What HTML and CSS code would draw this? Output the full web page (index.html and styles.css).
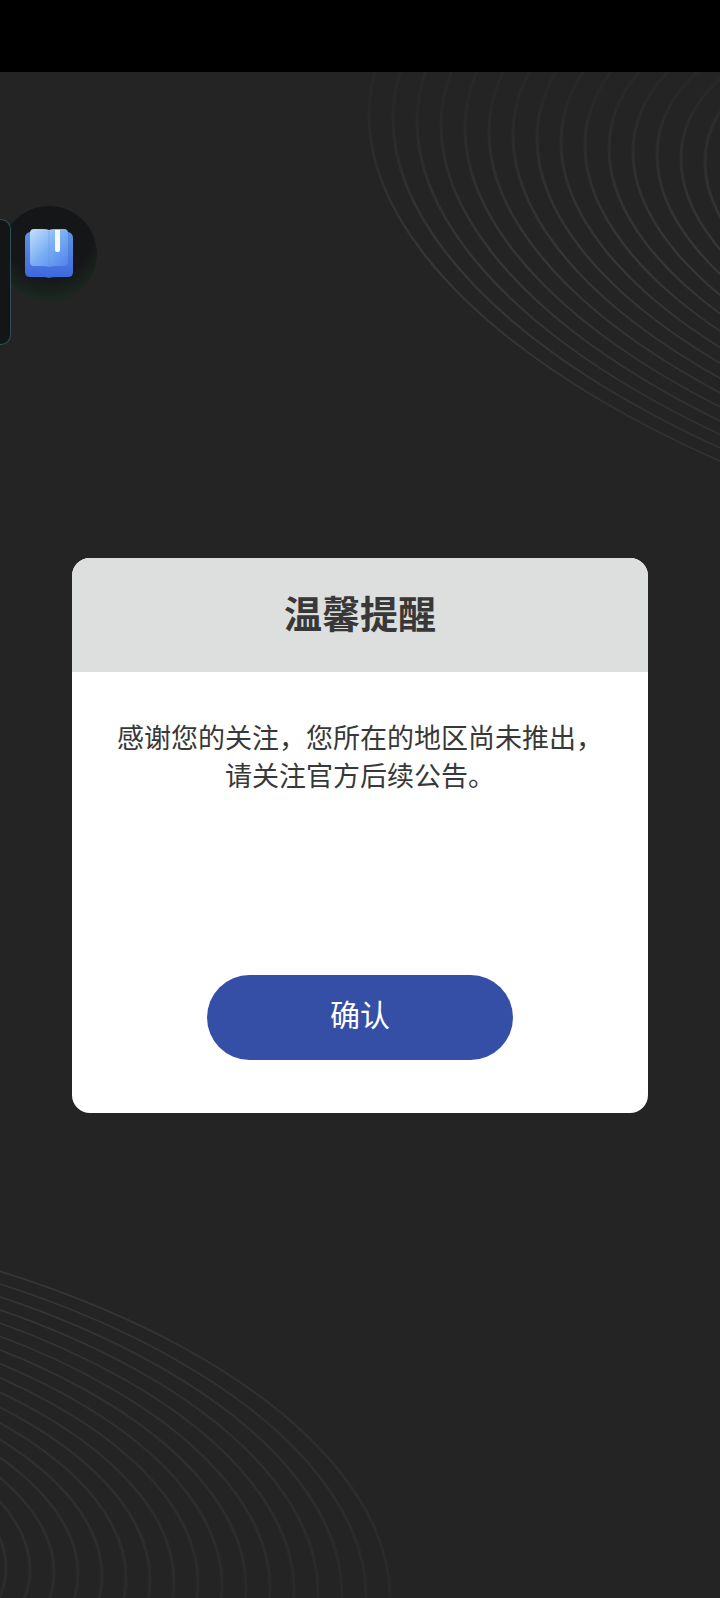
FILE: index.html
```
<!DOCTYPE html>
<html lang="zh-CN">
<head>
    <meta charset="UTF-8">
    <title>温馨提醒</title>
    <meta name="viewport" content="width=device-width, initial-scale=1">

    <link rel="stylesheet" href="styles.css">
</head>

<body>
    <header class="status-bar"></header>

    <main class="page">
        <svg class="rings rings-top" width="360" height="400" viewBox="360 72 360 400" aria-hidden="true">
            <defs>
                <linearGradient id="fadeTop" gradientUnits="userSpaceOnUse" x1="-790" y1="0" x2="-500" y2="600">
                    <stop offset="0" stop-color="#282828"/>
                    <stop offset="0.5" stop-color="#373737"/>
                    <stop offset="1" stop-color="#323232"/>
                </linearGradient>
            </defs>
            <g transform="matrix(1 0.139 0 0.455 1151 224)" fill="none" stroke="url(#fadeTop)" stroke-width="3">
                <circle r="446"/>
                <circle r="470"/>
                <circle r="494"/>
                <circle r="518"/>
                <circle r="542"/>
                <circle r="566"/>
                <circle r="590"/>
                <circle r="614"/>
                <circle r="638"/>
                <circle r="662"/>
                <circle r="686"/>
                <circle r="710"/>
                <circle r="734"/>
                <circle r="758"/>
                <circle r="782"/>
            </g>
        </svg>

        <svg class="rings rings-bottom" width="400" height="338" viewBox="0 1260 400 338" aria-hidden="true">
            <defs>
                <linearGradient id="fadeBottom" gradientUnits="userSpaceOnUse" x1="300" y1="-500" x2="660" y2="100">
                    <stop offset="0" stop-color="#353535"/>
                    <stop offset="1" stop-color="#272727"/>
                </linearGradient>
            </defs>
            <g transform="matrix(1 0.08 0 0.474 -305 1543)" fill="none" stroke="url(#fadeBottom)" stroke-width="3">
                <circle r="311"/>
                <circle r="335"/>
                <circle r="359"/>
                <circle r="383"/>
                <circle r="407"/>
                <circle r="431"/>
                <circle r="455"/>
                <circle r="479"/>
                <circle r="503"/>
                <circle r="527"/>
                <circle r="551"/>
                <circle r="575"/>
                <circle r="599"/>
                <circle r="623"/>
                <circle r="647"/>
                <circle r="671"/>
                <circle r="695"/>
            </g>
        </svg>

        <div class="float-ball">
            <svg width="52" height="52" viewBox="0 0 52 52" aria-hidden="true">
                <defs>
                    <linearGradient id="cover" x1="0" y1="0" x2="0" y2="1">
                        <stop offset="0" stop-color="#5e93e4"/>
                        <stop offset="1" stop-color="#3e68dc"/>
                    </linearGradient>
                    <linearGradient id="pages" x1="0" y1="0" x2="1" y2="1">
                        <stop offset="0" stop-color="#c6e1fc"/>
                        <stop offset="0.5" stop-color="#79aef4"/>
                        <stop offset="1" stop-color="#4f82ea"/>
                    </linearGradient>
                </defs>
                <path d="M7 4H45Q50 5 50 10V44Q50 49 45 49H33Q29 49 26 50Q23 49 19 49H7Q2 49 2 44V10Q2 5 7 4Z" fill="url(#cover)"/>
                <path d="M11 1H20Q24 1 26 2Q28 1 32 1H41Q45 1 45 5V34Q45 38 41 38H32Q28 38 26 39Q24 38 20 38H11Q7 38 7 34V5Q7 1 11 1Z" fill="url(#pages)"/>
                <path d="M26 3V38" stroke="#5c91e6" stroke-width="1" opacity="0.4"/>
                <path d="M32 2H37V22Q37 24 35 24H34Q32 24 32 22Z" fill="#f4f8ff"/>
            </svg>
        </div>
        <div class="side-handle"></div>

        <section class="dialog" role="dialog" aria-labelledby="dialog-title">
            <h1 class="dialog-title" id="dialog-title">温馨提醒</h1>
            <div class="dialog-body">
                <p class="message">感谢您的关注，您所在的地区尚未推出，请关注官方后续公告。</p>
                <button type="button" class="confirm-btn">确认</button>
            </div>
        </section>
    </main>
</body>
</html>
```
FILE: styles.css
```
* {
    box-sizing: border-box;
}

body {
    display: flex;
    flex-direction: column;
    min-height: 100vh;
    margin: 0;
    background-color: #242424;
    color: #383838;
    font-family: "Noto Sans CJK SC", sans-serif;
}

.status-bar {
    height: 72px;
    background-color: #000;
}

.page {
    position: relative;
    display: flex;
    flex: 1;
    align-items: center;
    justify-content: center;
    overflow: hidden;
}

/* background rings */
.rings {
    position: absolute;
}

.rings-top {
    top: 0;
    right: 0;
}

.rings-bottom {
    bottom: 0;
    left: 0;
}

/* floating shortcut at the left edge */
.float-ball {
    position: absolute;
    top: 134px;
    left: 1px;
    display: flex;
    align-items: center;
    justify-content: center;
    width: 96px;
    height: 96px;
    border-radius: 50%;
    background: radial-gradient(circle at 50% 30%, #151617 50%, #1f3527 100%);
}

.side-handle {
    position: absolute;
    top: 147px;
    left: 0;
    width: 11px;
    height: 126px;
    border: 1px solid #2f5258;
    border-left: none;
    border-radius: 0 10px 10px 0;
    background-color: #131516;
}

.dialog {
    position: relative;
    width: 80%;
    border-radius: 18px;
    background-color: #fff;
    overflow: hidden;
}

.dialog-title {
    margin: 0;
    padding: 26px 0 32px;
    background-color: #dddfde;
    font-size: 38px;
    font-weight: 700;
    line-height: 56px;
    text-align: center;
}

.dialog-body {
    display: flex;
    flex-direction: column;
    align-items: center;
    padding: 46px 40px 53px;
}

.message {
    min-height: 257px;
    margin: 0;
    font-size: 27px;
    line-height: 38px;
    text-align: center;
}

.confirm-btn {
    width: 306px;
    height: 85px;
    padding: 0 0 8px;
    border: none;
    border-radius: 43px;
    background-color: #364fa6;
    color: #fff;
    font-family: inherit;
    font-size: 30px;
    cursor: pointer;
}
```
